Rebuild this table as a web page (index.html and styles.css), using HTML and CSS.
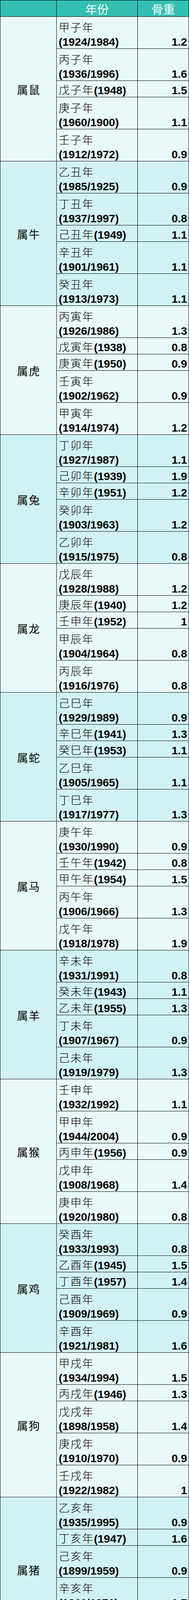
FILE: index.html
```html
<!DOCTYPE html>
<html lang="zh-CN">
<head>
<meta charset="utf-8">
<title>生肖骨重表</title>
<link rel="stylesheet" href="styles.css">
</head>
<body>
<div class="table">
  <div class="head">
    <div class="h1"></div>
    <div class="h2">年份</div>
    <div class="h3">骨重</div>
  </div>

  <section class="group light">
    <div class="animal">属鼠</div>
    <div class="rows">
      <div class="row two"><div class="year"><div class="ln ln1 gz">甲子年</div><div class="ln"><b>(1924/1984)</b></div></div><div class="val">1.2</div></div>
      <div class="row two"><div class="year"><div class="ln ln1 gz">丙子年</div><div class="ln"><b>(1936/1996)</b></div></div><div class="val">1.6</div></div>
      <div class="row one"><div class="year"><div class="ln"><span class="gz">戊子年</span><b>(1948)</b></div></div><div class="val">1.5</div></div>
      <div class="row two"><div class="year"><div class="ln ln1 gz">庚子年</div><div class="ln"><b>(1960/1900)</b></div></div><div class="val">1.1</div></div>
      <div class="row two"><div class="year"><div class="ln ln1 gz">壬子年</div><div class="ln"><b>(1912/1972)</b></div></div><div class="val">0.9</div></div>
    </div>
  </section>

  <section class="group dark">
    <div class="animal">属牛</div>
    <div class="rows">
      <div class="row two"><div class="year"><div class="ln ln1 gz">乙丑年</div><div class="ln"><b>(1985/1925)</b></div></div><div class="val">0.9</div></div>
      <div class="row two"><div class="year"><div class="ln ln1 gz">丁丑年</div><div class="ln"><b>(1937/1997)</b></div></div><div class="val">0.8</div></div>
      <div class="row one"><div class="year"><div class="ln"><span class="gz">己丑年</span><b>(1949)</b></div></div><div class="val">1.1</div></div>
      <div class="row two"><div class="year"><div class="ln ln1 gz">辛丑年</div><div class="ln"><b>(1901/1961)</b></div></div><div class="val">1.1</div></div>
      <div class="row two"><div class="year"><div class="ln ln1 gz">癸丑年</div><div class="ln"><b>(1913/1973)</b></div></div><div class="val">1.1</div></div>
    </div>
  </section>

  <section class="group light">
    <div class="animal">属虎</div>
    <div class="rows">
      <div class="row two"><div class="year"><div class="ln ln1 gz">丙寅年</div><div class="ln"><b>(1926/1986)</b></div></div><div class="val">1.3</div></div>
      <div class="row one"><div class="year"><div class="ln"><span class="gz">戊寅年</span><b>(1938)</b></div></div><div class="val">0.8</div></div>
      <div class="row one"><div class="year"><div class="ln"><span class="gz">庚寅年</span><b>(1950)</b></div></div><div class="val">0.9</div></div>
      <div class="row two"><div class="year"><div class="ln ln1 gz">壬寅年</div><div class="ln"><b>(1902/1962)</b></div></div><div class="val">0.9</div></div>
      <div class="row two"><div class="year"><div class="ln ln1 gz">甲寅年</div><div class="ln"><b>(1914/1974)</b></div></div><div class="val">1.2</div></div>
    </div>
  </section>

  <section class="group dark">
    <div class="animal">属兔</div>
    <div class="rows">
      <div class="row two"><div class="year"><div class="ln ln1 gz">丁卯年</div><div class="ln"><b>(1927/1987)</b></div></div><div class="val">1.1</div></div>
      <div class="row one"><div class="year"><div class="ln"><span class="gz">己卯年</span><b>(1939)</b></div></div><div class="val">1.9</div></div>
      <div class="row one"><div class="year"><div class="ln"><span class="gz">辛卯年</span><b>(1951)</b></div></div><div class="val">1.2</div></div>
      <div class="row two"><div class="year"><div class="ln ln1 gz">癸卯年</div><div class="ln"><b>(1903/1963)</b></div></div><div class="val">1.2</div></div>
      <div class="row two"><div class="year"><div class="ln ln1 gz">乙卯年</div><div class="ln"><b>(1915/1975)</b></div></div><div class="val">0.8</div></div>
    </div>
  </section>

  <section class="group light">
    <div class="animal">属龙</div>
    <div class="rows">
      <div class="row two"><div class="year"><div class="ln ln1 gz">戊辰年</div><div class="ln"><b>(1928/1988)</b></div></div><div class="val">1.2</div></div>
      <div class="row one"><div class="year"><div class="ln"><span class="gz">庚辰年</span><b>(1940)</b></div></div><div class="val">1.2</div></div>
      <div class="row one"><div class="year"><div class="ln"><span class="gz">壬申年</span><b>(1952)</b></div></div><div class="val">1</div></div>
      <div class="row two"><div class="year"><div class="ln ln1 gz">甲辰年</div><div class="ln"><b>(1904/1964)</b></div></div><div class="val">0.8</div></div>
      <div class="row two"><div class="year"><div class="ln ln1 gz">丙辰年</div><div class="ln"><b>(1916/1976)</b></div></div><div class="val">0.8</div></div>
    </div>
  </section>

  <section class="group dark">
    <div class="animal">属蛇</div>
    <div class="rows">
      <div class="row two"><div class="year"><div class="ln ln1 gz">己巳年</div><div class="ln"><b>(1929/1989)</b></div></div><div class="val">0.9</div></div>
      <div class="row one"><div class="year"><div class="ln"><span class="gz">辛巳年</span><b>(1941)</b></div></div><div class="val">1.3</div></div>
      <div class="row one"><div class="year"><div class="ln"><span class="gz">癸巳年</span><b>(1953)</b></div></div><div class="val">1.1</div></div>
      <div class="row two"><div class="year"><div class="ln ln1 gz">乙巳年</div><div class="ln"><b>(1905/1965)</b></div></div><div class="val">1.1</div></div>
      <div class="row two"><div class="year"><div class="ln ln1 gz">丁巳年</div><div class="ln"><b>(1917/1977)</b></div></div><div class="val">1.3</div></div>
    </div>
  </section>

  <section class="group light">
    <div class="animal">属马</div>
    <div class="rows">
      <div class="row two"><div class="year"><div class="ln ln1 gz">庚午年</div><div class="ln"><b>(1930/1990)</b></div></div><div class="val">0.9</div></div>
      <div class="row one"><div class="year"><div class="ln"><span class="gz">壬午年</span><b>(1942)</b></div></div><div class="val">0.8</div></div>
      <div class="row one"><div class="year"><div class="ln"><span class="gz">甲午年</span><b>(1954)</b></div></div><div class="val">1.5</div></div>
      <div class="row two"><div class="year"><div class="ln ln1 gz">丙午年</div><div class="ln"><b>(1906/1966)</b></div></div><div class="val">1.3</div></div>
      <div class="row two"><div class="year"><div class="ln ln1 gz">戊午年</div><div class="ln"><b>(1918/1978)</b></div></div><div class="val">1.9</div></div>
    </div>
  </section>

  <section class="group dark">
    <div class="animal">属羊</div>
    <div class="rows">
      <div class="row two"><div class="year"><div class="ln ln1 gz">辛未年</div><div class="ln"><b>(1931/1991)</b></div></div><div class="val">0.8</div></div>
      <div class="row one"><div class="year"><div class="ln"><span class="gz">癸未年</span><b>(1943)</b></div></div><div class="val">1.1</div></div>
      <div class="row one"><div class="year"><div class="ln"><span class="gz">乙未年</span><b>(1955)</b></div></div><div class="val">1.3</div></div>
      <div class="row two"><div class="year"><div class="ln ln1 gz">丁未年</div><div class="ln"><b>(1907/1967)</b></div></div><div class="val">0.9</div></div>
      <div class="row two"><div class="year"><div class="ln ln1 gz">己未年</div><div class="ln"><b>(1919/1979)</b></div></div><div class="val">1.3</div></div>
    </div>
  </section>

  <section class="group light">
    <div class="animal">属猴</div>
    <div class="rows">
      <div class="row two"><div class="year"><div class="ln ln1 gz">壬申年</div><div class="ln"><b>(1932/1992)</b></div></div><div class="val">1.1</div></div>
      <div class="row two"><div class="year"><div class="ln ln1 gz">甲申年</div><div class="ln"><b>(1944/2004)</b></div></div><div class="val">0.9</div></div>
      <div class="row one"><div class="year"><div class="ln"><span class="gz">丙申年</span><b>(1956)</b></div></div><div class="val">0.9</div></div>
      <div class="row two"><div class="year"><div class="ln ln1 gz">戊申年</div><div class="ln"><b>(1908/1968)</b></div></div><div class="val">1.4</div></div>
      <div class="row two"><div class="year"><div class="ln ln1 gz">庚申年</div><div class="ln"><b>(1920/1980)</b></div></div><div class="val">0.8</div></div>
    </div>
  </section>

  <section class="group dark">
    <div class="animal">属鸡</div>
    <div class="rows">
      <div class="row two"><div class="year"><div class="ln ln1 gz">癸酉年</div><div class="ln"><b>(1933/1993)</b></div></div><div class="val">0.8</div></div>
      <div class="row one"><div class="year"><div class="ln"><span class="gz">乙酉年</span><b>(1945)</b></div></div><div class="val">1.5</div></div>
      <div class="row one"><div class="year"><div class="ln"><span class="gz">丁酉年</span><b>(1957)</b></div></div><div class="val">1.4</div></div>
      <div class="row two"><div class="year"><div class="ln ln1 gz">己酉年</div><div class="ln"><b>(1909/1969)</b></div></div><div class="val">0.9</div></div>
      <div class="row two"><div class="year"><div class="ln ln1 gz">辛酉年</div><div class="ln"><b>(1921/1981)</b></div></div><div class="val">1.6</div></div>
    </div>
  </section>

  <section class="group light">
    <div class="animal">属狗</div>
    <div class="rows">
      <div class="row two"><div class="year"><div class="ln ln1 gz">甲戌年</div><div class="ln"><b>(1934/1994)</b></div></div><div class="val">1.5</div></div>
      <div class="row one"><div class="year"><div class="ln"><span class="gz">丙戌年</span><b>(1946)</b></div></div><div class="val">1.3</div></div>
      <div class="row two"><div class="year"><div class="ln ln1 gz">戊戌年</div><div class="ln"><b>(1898/1958)</b></div></div><div class="val">1.4</div></div>
      <div class="row two"><div class="year"><div class="ln ln1 gz">庚戌年</div><div class="ln"><b>(1910/1970)</b></div></div><div class="val">0.9</div></div>
      <div class="row two"><div class="year"><div class="ln ln1 gz">壬戌年</div><div class="ln"><b>(1922/1982)</b></div></div><div class="val">1</div></div>
    </div>
  </section>

  <section class="group dark">
    <div class="animal">属猪</div>
    <div class="rows">
      <div class="row two"><div class="year"><div class="ln ln1 gz">乙亥年</div><div class="ln"><b>(1935/1995)</b></div></div><div class="val">0.9</div></div>
      <div class="row one"><div class="year"><div class="ln"><span class="gz">丁亥年</span><b>(1947)</b></div></div><div class="val">1.6</div></div>
      <div class="row two"><div class="year"><div class="ln ln1 gz">己亥年</div><div class="ln"><b>(1899/1959)</b></div></div><div class="val">0.9</div></div>
      <div class="row two"><div class="year"><div class="ln ln1 gz">辛亥年</div><div class="ln"><b>(1911/1971)</b></div></div><div class="val">1.7</div></div>
      <div class="row two"><div class="year"><div class="ln ln1 gz">癸亥年</div><div class="ln"><b>(1923/1983)</b></div></div><div class="val">1.3</div></div>
    </div>
  </section>
</div>
</body>
</html>
```

FILE: styles.css
```css
html, body {
  margin: 0;
  padding: 0;
  background: #ffffff;
}

body {
  font-family: "Liberation Sans", "Noto Sans CJK SC", sans-serif;
  color: #000;
}

.table {
  box-sizing: border-box;
  width: 483px;
  border-top: 1px solid #000;
  border-left: 1px solid #000;
}

/* header */
.head {
  display: flex;
  height: 42px;
  background: #33bfb1;
}

.head > div {
  box-sizing: border-box;
  height: 42px;
  padding-top: 1px;
  border-right: 1px solid #000;
  border-bottom: 1px solid #000;
  color: #fff;
  font-family: "Noto Sans CJK SC", sans-serif;
  font-size: 30px;
  line-height: 40px;
  text-align: center;
}

.h1 { width: 144px; }
.h2 { width: 207px; }
.h3 { width: 131px; }

/* zodiac groups */
.group {
  display: flex;
}

.group.light { background: #e9f8f8; }
.group.dark { background: #d1f2f2; }

.animal {
  box-sizing: border-box;
  width: 144px;
  flex: none;
  display: flex;
  align-items: center;
  justify-content: center;
  padding: 2px 0 0 2px;
  border-right: 1px solid #000;
  border-bottom: 1px solid #000;
  font-family: "Noto Sans CJK SC", sans-serif;
  font-size: 28px;
  letter-spacing: 2px;
  line-height: 40px;
}

.rows {
  display: flex;
  flex-direction: column;
  width: 338px;
}

.row {
  display: flex;
  flex: none;
  height: 82px;
}

.row.one {
  height: 42px;
}

.year,
.val {
  box-sizing: border-box;
  display: flex;
  flex-direction: column;
  justify-content: flex-end;
  border-right: 1px solid #000;
  border-bottom: 1px solid #000;
}

.year {
  width: 207px;
  padding-left: 5px;
}

.ln {
  flex: none;
  height: 33px;
  line-height: 33px;
  font-family: "Liberation Sans", sans-serif;
  font-size: 28.5px;
  white-space: nowrap;
}

.ln.ln1 {
  height: 35px;
}

.gz {
  font-family: "Noto Sans CJK SC", sans-serif;
  font-size: 28px;
  font-weight: 300;
  letter-spacing: 2px;
  line-height: 26px;
}

.ln b,
.val {
  font-family: "Liberation Sans", sans-serif;
  font-weight: 700;
  font-size: 28.5px;
}

.val {
  width: 131px;
  align-items: flex-end;
  padding-right: 4px;
  line-height: 33px;
}
```
